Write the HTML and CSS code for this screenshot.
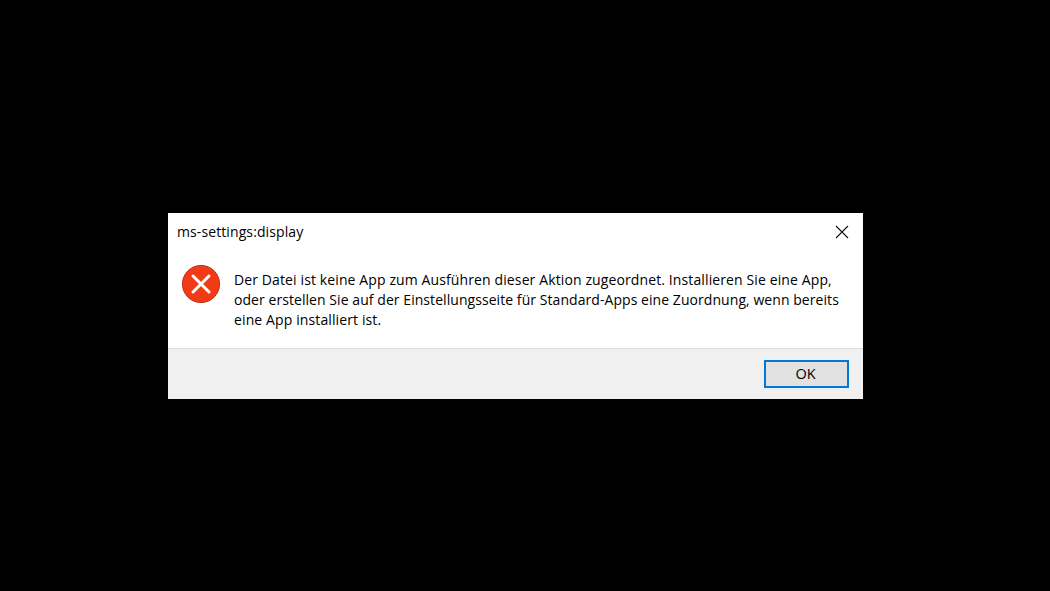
FILE: index.html
```html
<!DOCTYPE html>
<html lang="de">
<head>
<meta charset="utf-8">
<title>ms-settings:display</title>
<link rel="stylesheet" href="styles.css">
</head>
<body>
<div class="dialog">
  <div class="titlebar">
    <span class="title">ms-settings:display</span>
    <svg class="close" width="14" height="14" viewBox="0 0 14 14"><path d="M1 1L13 13M13 1L1 13" stroke="#111" stroke-width="1.1" fill="none"/></svg>
  </div>
  <div class="content">
    <svg class="icon" width="40" height="40" viewBox="0 0 40 40">
      <circle cx="20" cy="20" r="18.6" fill="#f23b16" stroke="#b5361c" stroke-width="1"/>
      <path d="M12 12L28 28M28 12L12 28" stroke="#fff" stroke-width="3" stroke-linecap="round" fill="none"/>
    </svg>
    <p class="message">Der Datei ist keine App zum Ausführen dieser Aktion zugeordnet. Installieren Sie eine App,<br><span class="line-tight">oder erstellen Sie auf der Einstellungsseite für Standard-Apps eine Zuordnung, wenn bereits</span><br>eine App installiert ist.</p>
  </div>
  <div class="footer">
    <button class="ok">OK</button>
  </div>
</div>
</body>
</html>
```
FILE: styles.css
```css
html, body { margin: 0; height: 100%; background: #000; }
body {
  padding: 213px 0 0 168px;
  box-sizing: border-box;
  font-family: "Open Sans", "Noto Sans", sans-serif;
  font-size: 14px;
  color: #000;
  overflow: hidden;
}
.dialog {
  width: 695px;
  height: 186px;
  background: #fff;
  display: flex;
  flex-direction: column;
}
.titlebar {
  height: 38px;
  display: flex;
  align-items: center;
  justify-content: space-between;
  padding: 0 14px 0 9px;
  flex: none;
}
.title { font-size: 14px; line-height: 20px; letter-spacing: 0.1px; }
.close { display: block; }
.content {
  flex: 1;
  display: flex;
  align-items: flex-start;
  padding: 13px 0 0 13px;
  gap: 13px;
}
.icon { flex: none; display: block; }
.message {
  margin: 6px 0 0;
  font-size: 14px;
  line-height: 20px;
  white-space: nowrap;
  letter-spacing: 0.115px;
}
.line-tight { letter-spacing: 0.06px; }
.footer {
  height: 51px;
  flex: none;
  box-sizing: border-box;
  background: #f0f0f0;
  border-top: 1px solid #dfdfdf;
  display: flex;
  justify-content: flex-end;
  align-items: flex-start;
  padding: 11px 14px 0 0;
}
.ok {
  width: 85px;
  height: 28px;
  box-sizing: border-box;
  border: 2px solid #0078d7;
  background: #e1e1e1;
  font-family: inherit;
  font-size: 14.5px;
  color: #000;
  padding: 0 2px 2px 0;
}
```
